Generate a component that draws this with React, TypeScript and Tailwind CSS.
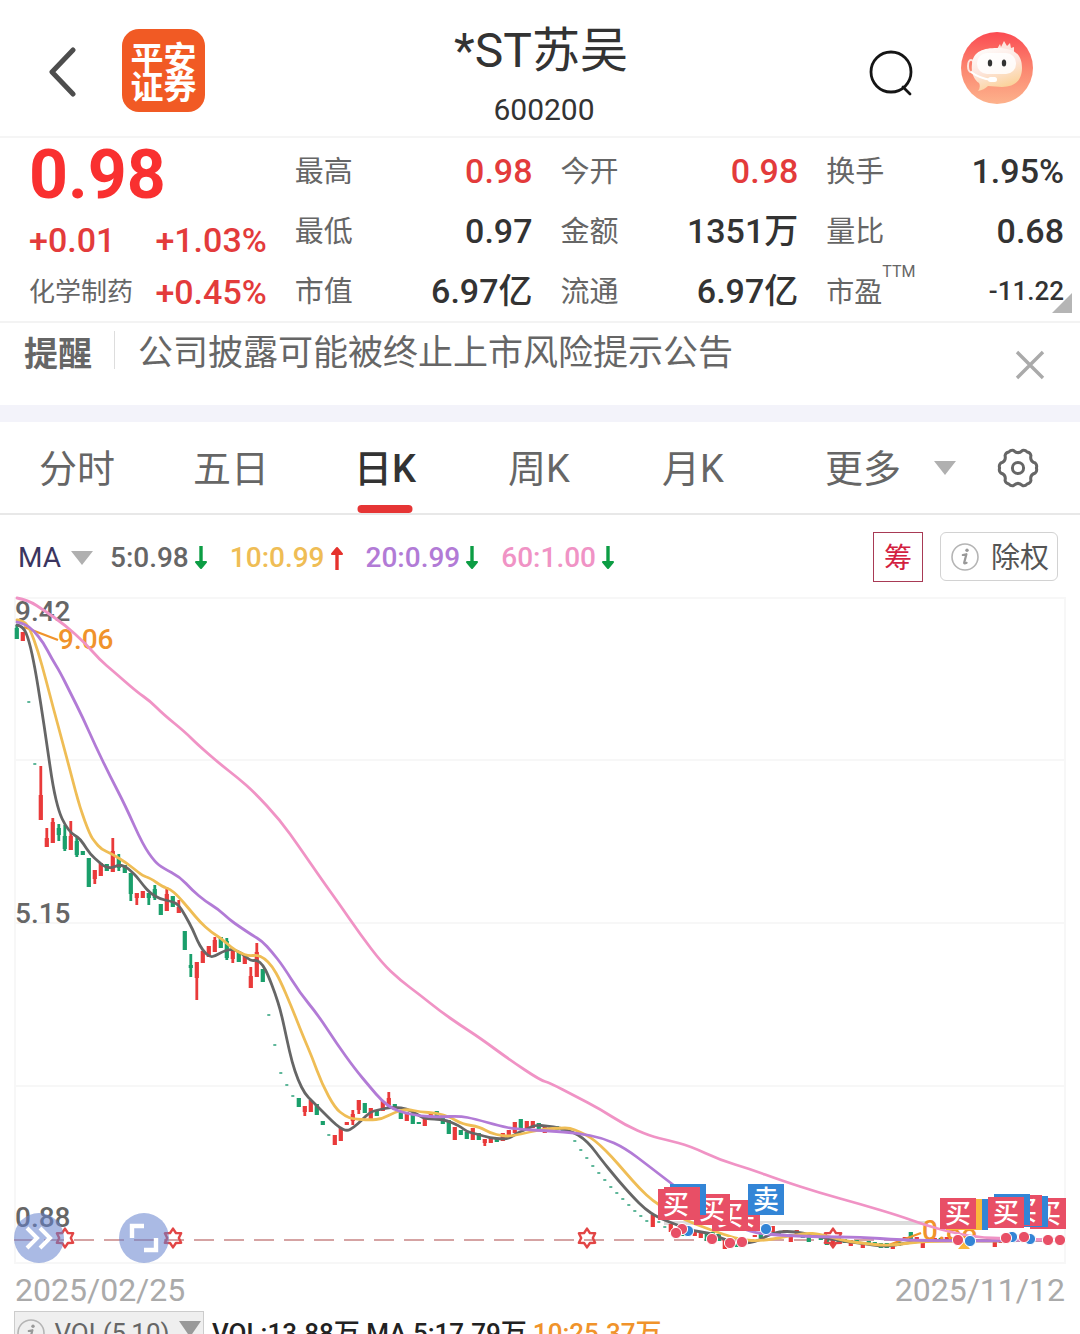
import React from "react";

const RED = "#e93a3a";
const GREEN = "#1a9f6b";

// Daily bars from left to right: "u" rising, "d" falling, "-" locked at the limit price.
// Each entry holds the high and low edges; an optional pair gives the body.
type Bar = ["u" | "d" | "-", number, number?, number?, number?];

const bars: Bar[] = [
  ["d", 625, 639, 628, 639], ["u", 632, 641], ["-", 702], ["-", 764],
  ["u", 766, 820, 795, 820], ["u", 828, 847, 838, 847], ["u", 818, 843, 822, 843], ["d", 824, 841, 828, 835],
  ["d", 825, 851, 836, 849], ["u", 821, 850, 836, 850], ["d", 837, 857, 841, 855], ["d", 851, 855],
  ["d", 858, 887], ["u", 870, 884, 870, 879], ["u", 863, 876], ["d", 864, 871],
  ["u", 838, 872, 851, 872], ["d", 854, 871, 858, 868], ["d", 865, 873], ["d", 873, 901, 873, 894],
  ["u", 893, 905, 893, 898], ["u", 891, 898], ["d", 893, 905, 893, 898], ["d", 885, 900, 889, 898],
  ["d", 904, 915], ["u", 887, 911, 894, 911], ["d", 896, 907], ["u", 900, 913, 907, 913],
  ["d", 931, 950], ["d", 954, 977, 965, 968], ["u", 962, 1000, 962, 978], ["u", 951, 963],
  ["u", 946, 957], ["u", 937, 952, 940, 952], ["d", 937, 948], ["d", 938, 960, 941, 958],
  ["u", 950, 963, 950, 959], ["d", 952, 962], ["u", 956, 964], ["u", 967, 988, 976, 988],
  ["u", 943, 977, 952, 977], ["d", 969, 982], ["-", 1015], ["-", 1045],
  ["-", 1073], ["-", 1085], ["-", 1096], ["d", 1098, 1107],
  ["u", 1106, 1116, 1106, 1112], ["u", 1100, 1112], ["d", 1104, 1115], ["d", 1121, 1125],
  ["-", 1135], ["u", 1135, 1145], ["u", 1128, 1141], ["u", 1122, 1125],
  ["u", 1110, 1125, 1114, 1121], ["u", 1100, 1114, 1100, 1110], ["d", 1103, 1113], ["u", 1108, 1119],
  ["d", 1110, 1116], ["u", 1101, 1111], ["u", 1092, 1108, 1098, 1105], ["d", 1104, 1110],
  ["d", 1110, 1119], ["u", 1112, 1121], ["d", 1113, 1124], ["d", 1122, 1124],
  ["u", 1118, 1126], ["u", 1113, 1120], ["d", 1111, 1117], ["d", 1114, 1124],
  ["d", 1120, 1134], ["u", 1127, 1140], ["d", 1130, 1135], ["d", 1132, 1139],
  ["u", 1128, 1140], ["d", 1133, 1140], ["u", 1139, 1146, 1139, 1143], ["u", 1137, 1143],
  ["d", 1138, 1142], ["u", 1133, 1141], ["u", 1130, 1137], ["u", 1122, 1133],
  ["d", 1119, 1129], ["u", 1121, 1128], ["u", 1121, 1128], ["d", 1123, 1130],
  ["u", 1127, 1133], ["d", 1127, 1131], ["d", 1126, 1130], ["d", 1128, 1133],
  ["-", 1131], ["-", 1141], ["-", 1150], ["-", 1158],
  ["-", 1166], ["-", 1173], ["-", 1180], ["-", 1187],
  ["-", 1193], ["-", 1199], ["-", 1205], ["-", 1211],
  ["-", 1216], ["-", 1221], ["u", 1215, 1227], ["-", 1222],
  ["-", 1227], ["u", 1224, 1232], ["u", 1228, 1234], ["d", 1230, 1236],
  ["d", 1230, 1236], ["u", 1230, 1236], ["u", 1232, 1238], ["d", 1234, 1241],
  ["d", 1232, 1239], ["d", 1234, 1241], ["u", 1240, 1249], ["u", 1240, 1246],
  ["d", 1243, 1247], ["u", 1238, 1243], ["u", 1239, 1243], ["u", 1235, 1237],
  ["d", 1234, 1238], ["u", 1229, 1234], ["u", 1226, 1232], ["d", 1231, 1235],
  ["u", 1230, 1233], ["u", 1234, 1242], ["u", 1230, 1234], ["d", 1234, 1238],
  ["d", 1236, 1242], ["u", 1233, 1238], ["d", 1235, 1240], ["d", 1240, 1245],
  ["u", 1239, 1246], ["d", 1238, 1242], ["d", 1239, 1243], ["u", 1240, 1246],
  ["d", 1240, 1244], ["u", 1242, 1248], ["d", 1241, 1245], ["d", 1242, 1246],
  ["d", 1243, 1248], ["d", 1243, 1248], ["u", 1244, 1249], ["d", 1242, 1246],
  ["u", 1237, 1240], ["d", 1232, 1239], ["u", 1237, 1241], ["u", 1243, 1248],
  ["d", 1239, 1242], ["u", 1238, 1242], ["d", 1238, 1241], ["u", 1237, 1241],
  ["u", 1238, 1242], ["d", 1238, 1242], ["u", 1239, 1242], ["d", 1239, 1242],
  ["u", 1239, 1242], ["d", 1239, 1242], ["u", 1238, 1242], ["u", 1242, 1247],
  ["u", 1239, 1243], ["d", 1238, 1241], ["d", 1238, 1242], ["u", 1238, 1242],
  ["d", 1239, 1242], ["u", 1238, 1242], ["u", 1239, 1242], ["u", 1239, 1242],
];

const ma5 =
  "17,625 23,626 29,640 35,668 41,705 47,745 53,787 59,812 65,825 72,834 78,837 83,843 90,854 100,863 105,867 112,868 118,865 125,866 132,872 137,877 143,885 150,893 160,899 170,901 178,904 185,915 193,930 197,940 203,951 210,957 215,956 222,952 230,949 238,951 245,956 251,961 257,960 263,965 268,975 275,993 281,1012 287,1040 292,1062 298,1080 305,1094 312,1101 323,1112 332,1121 340,1128 347,1131 353,1128 362,1120 370,1112 378,1110 387,1108 395,1107 407,1109 415,1113 425,1119 443,1119 460,1126 467,1132 477,1134 490,1138 503,1139 510,1138 517,1133 527,1129 535,1125 547,1126 560,1128 573,1132 583,1138 592,1147 600,1158 617,1179 633,1197 645,1209 657,1217 677,1225 693,1231 710,1233 723,1239 737,1243 750,1243 760,1240 772,1233 787,1231 803,1233 820,1237 840,1241 860,1243 887,1247 905,1243 930,1240 1000,1241 1062,1240";
const ma10 =
  "17,620 24,621 30,629 38,651 46,680 53,707 62,740 71,774 80,808 90,835 95,842 101,849 112,854 125,862 133,868 143,876 150,878 163,887 170,889 178,896 190,910 200,922 211,932 222,939 232,948 240,953 249,956 257,955 264,958 272,966 280,980 292,1008 303,1036 312,1057 322,1084 335,1108 345,1116 353,1119 370,1120 382,1119 395,1112 407,1109 420,1112 437,1113 450,1117 462,1124 480,1127 490,1133 503,1136 512,1136 530,1132 545,1129 560,1128 570,1128 580,1132 590,1137 600,1145 612,1157 625,1172 640,1189 653,1201 666,1209 685,1220 703,1227 725,1235 743,1240 760,1241 785,1237 805,1233 820,1234 840,1240 860,1243 890,1246 920,1241 1000,1241 1062,1240";
const ma20 =
  "17,622 25,624 33,630 43,642 52,659 60,672 70,692 83,718 95,745 110,776 125,805 143,845 155,862 163,868 180,877 192,890 205,901 218,909 230,920 240,927 252,935 262,941 272,952 283,966 300,993 318,1015 337,1044 355,1069 370,1087 382,1101 393,1109 405,1113 420,1116 440,1117 460,1116 475,1119 500,1126 515,1129 550,1131 577,1133 603,1138 625,1148 650,1167 672,1184 700,1205 730,1222 750,1232 775,1235 820,1237 860,1237 900,1240 960,1241 1062,1240";
const ma60 =
  "17,598 28,600 45,611 65,625 85,643 100,660 113,671 137,692 150,701 163,714 185,732 197,744 220,764 238,778 254,792 280,820 300,848 322,880 340,905 360,934 382,963 400,980 420,995 440,1011 460,1025 480,1038 510,1060 540,1080 550,1083 575,1096 600,1109 625,1125 650,1136 667,1140 690,1146 720,1160 750,1169 780,1180 820,1193 860,1204 900,1216 925,1225 950,1232 975,1237 1010,1239 1062,1240";

function smooth(points: string) {
  const p = points.split(" ").map((s) => s.split(",").map(Number));
  let d = `M${p[0][0]} ${p[0][1]}`;
  for (let i = 1; i < p.length - 1; i++) {
    d += `Q${p[i][0]} ${p[i][1]} ${(p[i][0] + p[i + 1][0]) / 2} ${(p[i][1] + p[i + 1][1]) / 2}`;
  }
  return d + `L${p[p.length - 1][0]} ${p[p.length - 1][1]}`;
}

const C = { buy: "#e84f66", sell: "#3385d6", both: "#fbb83c" };

// Trade flags, painted back to front: x, y, colour, label.
const flags: [number, number, string, string][] = [
  [724, 1200, C.buy, "买"], [712, 1200, C.buy, "买"], [694, 1194, C.buy, "买"],
  [670, 1184, C.sell, ""], [664, 1187, C.buy, ""], [658, 1189, C.buy, "买"],
  [748, 1184, C.sell, "卖"],
  [1030, 1198, C.buy, "买"], [1012, 1196, C.sell, ""], [1006, 1195, C.buy, "买"],
  [994, 1194, C.sell, ""], [952, 1199, C.sell, ""], [946, 1199, C.both, ""],
  [988, 1197, C.buy, "买"], [940, 1198, C.buy, "买"],
];

const dots: [number, number, string][] = [
  [688, 1231, C.sell], [682, 1229, C.buy], [676, 1233, C.buy], [712, 1239, C.buy],
  [730, 1243, C.buy], [742, 1242, C.buy], [766, 1229, C.sell], [970, 1241, C.sell],
  [958, 1240, C.buy], [1012, 1237, C.sell], [1006, 1238, C.buy], [1030, 1239, C.sell],
  [1024, 1237, C.buy], [1048, 1240, C.buy], [1060, 1240, C.buy],
];

function star(cx: number, cy: number) {
  const pts: string[] = [];
  for (let i = 0; i < 12; i++) {
    const r = i % 2 ? 5.8 : 9.4;
    const a = (Math.PI / 6) * i - Math.PI / 2;
    pts.push(`${cx + r * Math.cos(a)},${cy + r * Math.sin(a)}`);
  }
  return pts.join(" ");
}

function gearPath() {
  const at = (deg: number, r: number) => {
    const a = (deg * Math.PI) / 180;
    return `${(22 + r * Math.cos(a)).toFixed(2)} ${(22 + r * Math.sin(a)).toFixed(2)}`;
  };
  let d = "";
  for (let i = 0; i < 6; i++) {
    const c = i * 60;
    d += `${i ? "L" : "M"}${at(c - 16, 18)}Q${at(c - 9, 19.6)} ${at(c, 18.4)}Q${at(c + 9, 19.6)} ${at(c + 16, 18)}Q${at(c + 30, 13.4)} ${at(c + 44, 18)}`;
  }
  return d + "Z";
}

function Triangle() {
  return (
    <svg viewBox="0 0 22 14" className="h-3.5 w-[22px] shrink-0" aria-hidden="true">
      <path d="M0 0H22L11 14Z" fill="#b0b0b0" />
    </svg>
  );
}

function Arrow({ up = false }: { up?: boolean }) {
  return (
    <svg viewBox="0 0 20 24" className="h-6 w-5 shrink-0" aria-hidden="true">
      {up ? (
        <>
          <path d="M12 24V6" stroke="#e5322d" strokeWidth="3.4" />
          <path d="M12 2L7 8H17Z" fill="#e5322d" stroke="#e5322d" strokeWidth="2" strokeLinejoin="round" />
        </>
      ) : (
        <>
          <path d="M12 0V18" stroke="#0c9d44" strokeWidth="3.4" />
          <path d="M12 22L7 16H17Z" fill="#0c9d44" stroke="#0c9d44" strokeWidth="2" strokeLinejoin="round" />
        </>
      )}
    </svg>
  );
}

function InfoIcon() {
  return (
    <svg viewBox="0 0 28 28" className="size-7 shrink-0" aria-hidden="true">
      <circle cx="14" cy="14" r="13" fill="none" stroke="#b5b5b5" strokeWidth="1.6" />
      <path d="M11.8 12L15.4 11.2L13.2 19.6Q13 21.2 15.6 19.8" fill="none" stroke="#999" strokeWidth="2.2" strokeLinecap="round" strokeLinejoin="round" />
      <circle cx="16" cy="7.2" r="1.7" fill="#999" />
    </svg>
  );
}

function Header() {
  return (
    <header className="flex h-[138px] shrink-0 items-start border-b-2 border-[#f5f5f5]">
      <div className="flex flex-1 items-center pt-[29px] pl-12">
        <button aria-label="返回" className="mr-11 w-[30px]">
          <svg viewBox="0 0 30 52" className="h-[52px] w-[30px]">
            <path d="M25 5L4 27L25 49" fill="none" stroke="#4d4d4d" strokeWidth="5" strokeLinecap="round" strokeLinejoin="round" />
          </svg>
        </button>
        <div className="flex size-[83px] items-center justify-center rounded-[17px] bg-[#f15a24] pt-1">
          <div className="w-[68px] text-center text-[33px] leading-[29px] font-bold text-white">
            平安
            <br />
            证券
          </div>
        </div>
      </div>
      <div className="text-center text-[#333]">
        <h1 className="pt-[18px] text-[48px] leading-[66px]">*ST苏吴</h1>
        <p className="pl-1.5 text-[30px] leading-[52px]">600200</p>
      </div>
      <div className="flex flex-1 items-center justify-end gap-[46px] pt-[31px] pr-[46px]">
        <button aria-label="搜索">
          <svg viewBox="0 0 46 50" className="mt-3 h-[50px] w-[46px]">
            <circle cx="23" cy="23" r="20" fill="none" stroke="#151515" strokeWidth="2.8" />
            <path d="M35 38L42 45" stroke="#151515" strokeWidth="2.8" strokeLinecap="round" />
          </svg>
        </button>
        <button aria-label="智能客服">
          <svg viewBox="0 0 74 74" className="size-[74px]">
            <defs>
              <linearGradient id="av" x1="0" y1="0" x2="0" y2="1">
                <stop offset="0" stopColor="#fb4b52" />
                <stop offset="0.55" stopColor="#fb8a72" />
                <stop offset="1" stopColor="#fdb28c" />
              </linearGradient>
              <linearGradient id="face" x1="0" y1="0" x2="0.4" y2="1">
                <stop offset="0" stopColor="#fff" />
                <stop offset="0.55" stopColor="#fde6de" />
                <stop offset="1" stopColor="#fbd39c" />
              </linearGradient>
            </defs>
            <circle cx="37" cy="37" r="36" fill="url(#av)" />
            <path d="M37 18L40 13L41 16L44 10L47 15L50 12L51 17L54 16L54 22Z" fill="#fde3dd" />
            <ellipse cx="11" cy="35" rx="3" ry="6" fill="none" stroke="#fde3dd" strokeWidth="2" />
            <path d="M12 33C13 20 24 17 37 17C54 17 62 23 62 37C62 50 54 56 42 56C37 56 33 55 28 55Q24 59 18 60Q21 56 19 52C13 48 11 40 12 33Z" fill="url(#face)" />
            <rect x="17" y="22" width="39" height="21" rx="10" fill="#fff" opacity="0.85" />
            <path d="M11 41Q19 47 31 49" fill="none" stroke="#fff" strokeWidth="2" />
            <rect x="28" y="46" width="9" height="5" rx="2.5" fill="#fff" />
            <ellipse cx="30" cy="32" rx="2.2" ry="3.6" fill="#333" />
            <ellipse cx="44" cy="32" rx="2.2" ry="3.6" fill="#333" />
          </svg>
        </button>
      </div>
    </header>
  );
}

const stats: [string, string, boolean?][][] = [
  [["最高", "0.98", true], ["最低", "0.97"], ["市值", "6.97亿"]],
  [["今开", "0.98", true], ["金额", "1351万"], ["流通", "6.97亿"]],
  [["换手", "1.95%"], ["量比", "0.68"], ["市盈", "-11.22"]],
];

function Quote() {
  return (
    <section className="relative grid h-[185px] shrink-0 grid-cols-4 gap-x-7 border-b-2 border-[#f3f3f3] pr-4 pl-[29px] font-medium text-[#e33b3b]">
      <div className="whitespace-nowrap">
        <p className="text-[68px] leading-[74px] font-bold text-[#f93030]">0.98</p>
        <div className="flex justify-between text-[34px] leading-[56px]">
          <span>+0.01</span>
          <span>+1.03%</span>
        </div>
        <div className="flex items-center justify-between text-[34px] leading-[48px]">
          <span className="text-[26px] font-normal text-[#666]">化学制药</span>
          <span>+0.45%</span>
        </div>
      </div>
      {stats.map((col, i) => (
        <dl key={i} className="pt-[3px] whitespace-nowrap">
          {col.map(([label, value, hot]) => (
            <div key={label} className="flex h-[60px] items-center justify-between text-[#333]">
              {label === "市盈" ? (
                <dt className="relative pt-1 text-[28px] font-normal text-[#666]">
                  市盈<span className="absolute -top-2 left-full text-base">TTM</span>
                </dt>
              ) : (
                <dt className="pt-1 text-[29px] font-normal text-[#666]">{label}</dt>
              )}
              <dd className={label === "市盈" ? "text-[26px]" : hot ? "text-[34px] text-[#e33b3b]" : "text-[34px]"}>{value}</dd>
            </div>
          ))}
        </dl>
      ))}
      <svg viewBox="0 0 20 20" className="absolute right-2 bottom-2 size-5" aria-hidden="true">
        <path d="M20 0V20H0Z" fill="#b5b5b5" />
      </svg>
    </section>
  );
}

function Notice() {
  return (
    <section className="flex h-[82px] shrink-0 items-start pt-1.5 pr-8 pl-6 whitespace-nowrap">
      <strong className="text-[34px] leading-[50px] font-bold text-[#666]">提醒</strong>
      <span className="mt-0.5 ml-[22px] h-[38px] w-px bg-[#ddd]" />
      <a href="#notice" className="ml-[23px] text-[35px] leading-[50px] text-[#666]">
        公司披露可能被终止上市风险提示公告
      </a>
      <button aria-label="关闭" className="mt-[18px] ml-auto">
        <svg viewBox="0 0 36 36" className="size-9">
          <path d="M5 5L31 31M31 5L5 31" stroke="#aaa" strokeWidth="3.4" />
        </svg>
      </button>
    </section>
  );
}

function Tabs() {
  return (
    <nav className="grid h-[93px] shrink-0 grid-cols-[1fr_1fr_1fr_1fr_1fr_310px] border-b-2 border-[#e8e8e8] text-[38px] whitespace-nowrap text-[#666]">
      {["分时", "五日", "日K", "周K", "月K"].map((t) => (
        <button key={t} className={t === "日K" ? "relative pt-1 font-medium text-[#333]" : "relative pt-1"}>
          {t}
          {t === "日K" && <span className="absolute bottom-0 left-1/2 h-2 w-[55px] -translate-x-1/2 rounded-full bg-[#e63535]" />}
        </button>
      ))}
      <div className="flex items-center justify-between pr-10 pl-[55px]">
        <button className="flex items-center gap-[33px]">
          <span className="pt-1">更多</span>
          <Triangle />
        </button>
        <button aria-label="设置">
          <svg viewBox="0 0 44 44" className="size-11">
            <path d={gearPath()} fill="none" stroke="#666" strokeWidth="3" strokeLinejoin="round" />
            <circle cx="22" cy="22" r="5.6" fill="none" stroke="#666" strokeWidth="3" />
          </svg>
        </button>
      </div>
    </nav>
  );
}

function Averages() {
  return (
    <section className="flex h-[83px] shrink-0 items-center pr-[22px] pl-[18px] text-[28px] font-medium whitespace-nowrap">
      <button className="mr-[17px] flex items-center gap-2.5 pt-0.5 font-normal text-[#3b3560]">
        MA
        <Triangle />
      </button>
      <div className="flex gap-[21px] pt-[3px]">
        <span className="flex items-center text-[#666]">5:0.98<Arrow /></span>
        <span className="flex items-center text-[#efbd55]">10:0.99<Arrow up /></span>
        <span className="flex items-center text-[#b27bd6]">20:0.99<Arrow /></span>
        <span className="flex items-center text-[#f093c5]">60:1.00<Arrow /></span>
      </div>
      <button className="mr-[17px] ml-auto size-[50px] border border-[#a83a55] pt-1 text-[28px] leading-none font-normal text-[#d3213f]">筹</button>
      <button className="flex h-[49px] items-center gap-3 rounded-md border border-[#d2d2d2] pr-2 pl-2.5 text-[29px] leading-none font-normal text-[#555]">
        <InfoIcon />
        <span className="pt-1">除权</span>
      </button>
    </section>
  );
}

function Chart() {
  return (
    <section className="relative shrink-0">
      <svg viewBox="0 598 1080 665" className="block w-full overflow-visible" role="img" aria-label="日K线图">
        <g stroke="#f7f7f7" strokeWidth="2" fill="none">
          <path d="M15 598H1065V1263H15ZM15 760H1065M15 923H1065M15 1086H1065" />
        </g>
        <path d="M14 1240H1065" stroke="#d5a3a3" strokeWidth="2" strokeDasharray="20 10" />
        <path d="M664 1223H928" stroke="#dcdcdc" strokeWidth="4" />
        <g fill="#666" fontSize="28" fontWeight="500">
          <text x="15" y="621">9.42</text>
          <text x="15" y="923">5.15</text>
          <text x="15" y="1227">0.88</text>
        </g>
        {bars.map(([kind, top, low, bodyTop, bodyLow], i) => {
          const x = 16.8 + i * 6;
          if (low === undefined) return <rect key={i} x={x - 1.5} y={top - 1} width="3" height="2" fill="#5fb79a" />;
          const c = kind === "u" ? RED : GREEN;
          const bt = bodyTop ?? top;
          const bl = bodyLow ?? low;
          return (
            <g key={i} fill={c}>
              <rect x={x - 1.4} y={top} width="2.8" height={low - top} />
              <rect x={x - 2.1} y={bt} width="4.2" height={bl - bt} />
            </g>
          );
        })}
        {[65, 173, 587, 833].map((x) => (
          <polygon key={x} points={star(x, 1238)} fill="none" stroke="#e24545" strokeWidth="2.4" strokeLinejoin="round" />
        ))}
        <g stroke="#f0932b" strokeWidth="2.4">
          <path d="M24 627L58 640" />
          <path d="M886 1246L921 1233" />
        </g>
        <g fill="#f0932b" fontSize="28" fontWeight="500">
          <text x="58" y="649">9.06</text>
          <text x="922" y="1240">0.88</text>
        </g>
        <g fill="none" strokeWidth="2.8" strokeLinecap="round">
          <path d={smooth(ma5)} stroke="#666" />
          <path d={smooth(ma10)} stroke="#efbd55" />
          <path d={smooth(ma20)} stroke="#b27bd6" />
          <path d={smooth(ma60)} stroke="#f093c5" />
        </g>
        {flags.map(([x, y, c, t], i) => (
          <g key={i}>
            <rect x={x} y={y} width={Math.min(36, 1066 - x)} height="31" fill={c} />
            {t && <text x={x + 18} y={y + 25} fontSize="26" fontWeight="500" fill="#fff" textAnchor="middle">{t}</text>}
          </g>
        ))}
        <path d="M964 1242L970 1249H958Z" fill={C.both} />
        {dots.map(([x, y, c], i) => (
          <circle key={i} cx={x} cy={y} r="5.6" fill={c} stroke="#fff" strokeWidth="1" />
        ))}
      </svg>
      <button aria-label="展开" className="absolute bottom-0 left-3.5 flex size-[50px] items-center justify-center rounded-full bg-[#6482cd]/55">
        <svg viewBox="0 0 30 28" className="h-7 w-[30px]">
          <path d="M3 4L13 14L3 24M16 4L26 14L16 24" fill="none" stroke="#fff" strokeWidth="4" />
        </svg>
      </button>
      <button aria-label="全屏" className="absolute bottom-0 left-[119px] flex size-[50px] items-center justify-center rounded-full bg-[#6482cd]/55">
        <svg viewBox="0 0 30 30" className="size-[30px]">
          <path d="M3 15V3H15M15 27H27V15" fill="none" stroke="#fff" strokeWidth="4.4" />
        </svg>
      </button>
    </section>
  );
}

export default function App() {
  return (
    <main lang="zh-CN" className="flex h-screen w-full flex-col overflow-hidden bg-white font-[Roboto,'Noto_Sans_CJK_SC',sans-serif]">
      <Header />
      <Quote />
      <Notice />
      <div className="h-[17px] shrink-0 bg-[#f3f3fa]" />
      <Tabs />
      <Averages />
      <Chart />
      <div className="flex h-12 shrink-0 items-center justify-between px-[15px] pt-1.5 text-[32px] text-[#aaa]">
        <time dateTime="2025-02-25">2025/02/25</time>
        <time dateTime="2025-11-12">2025/11/12</time>
      </div>
      <section className="flex h-11 shrink-0 items-center gap-1.5 pl-3.5 text-[26px] font-medium whitespace-nowrap text-[#222]">
        <button className="mr-0.5 flex h-full w-[190px] items-center justify-between border border-[#ccc] bg-[#efefef] px-0.5 font-normal text-[#666]">
          <InfoIcon />
          VOL(5,10)
          <svg viewBox="0 0 22 16" className="mb-2 h-4 w-[22px]" aria-hidden="true">
            <path d="M0 0H22L11 16Z" fill="#999" />
          </svg>
        </button>
        <span>VOL:13.88万 MA 5:17.79万</span>
        <span className="text-[#f0932b]">10:25.37万</span>
      </section>
    </main>
  );
}
